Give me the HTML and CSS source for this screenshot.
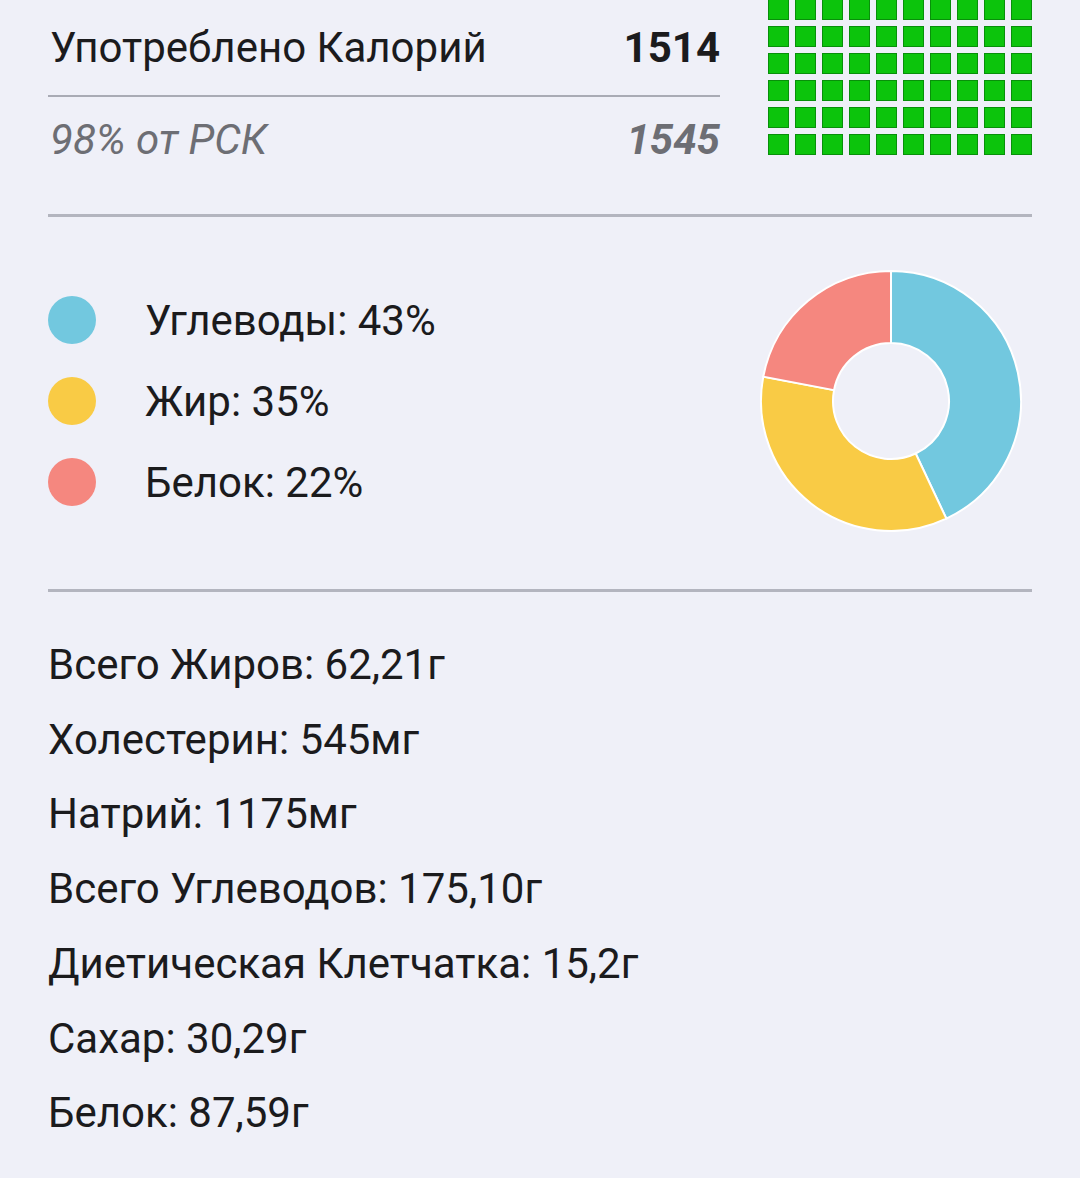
FILE: index.html
```html
<!DOCTYPE html>
<html lang="ru">
<head>
    <meta charset="UTF-8">
    <meta name="viewport" content="width=device-width, initial-scale=1.0">
    <title>Питание</title>
    <link rel="stylesheet" href="styles.css">
</head>
<body>
    <div class="page">
        <!-- Калории -->
        <div class="calories">
            <div class="calories-text">
                <div class="row">
                    <span>Употреблено Калорий</span>
                    <span class="value">1514</span>
                </div>
                <div class="thin-line"></div>
                <div class="row muted">
                    <span>98% от РСК</span>
                    <span class="value">1545</span>
                </div>
            </div>
            <div class="squares" id="squares"></div>
        </div>

        <div class="separator"></div>

        <!-- Макронутриенты -->
        <div class="macros">
            <div class="legend">
                <div class="legend-item"><span class="dot carbs"></span>Углеводы: 43%</div>
                <div class="legend-item"><span class="dot fat"></span>Жир: 35%</div>
                <div class="legend-item"><span class="dot protein"></span>Белок: 22%</div>
            </div>
            <svg class="donut" width="262" height="262" viewBox="0 0 262 262">
                <path fill="#72c8df" d="M131 1 A130 130 0 0 1 186.35 248.62 L155.70 183.48 A58 58 0 0 0 131 73 Z"/>
                <path fill="#f9cb45" d="M186.35 248.62 A130 130 0 0 1 3.30 106.64 L74.03 120.13 A58 58 0 0 0 155.70 183.48 Z"/>
                <path fill="#f5877f" d="M3.30 106.64 A130 130 0 0 1 131 1 L131 73 A58 58 0 0 0 74.03 120.13 Z"/>
            </svg>
        </div>

        <div class="separator"></div>

        <!-- Детали -->
        <div class="details">
            <div>Всего Жиров: 62,21г</div>
            <div>Холестерин: 545мг</div>
            <div>Натрий: 1175мг</div>
            <div>Всего Углеводов: 175,10г</div>
            <div>Диетическая Клетчатка: 15,2г</div>
            <div>Сахар: 30,29г</div>
            <div>Белок: 87,59г</div>
        </div>
    </div>

    <script>
        const squares = document.getElementById('squares');
        for (let i = 0; i < 60; i++) {
            const sq = document.createElement('div');
            sq.className = 'square';
            squares.appendChild(sq);
        }
    </script>
</body>
</html>
```

FILE: styles.css
```css
/* General */
body {
    font-family: 'Roboto', 'Noto Sans', sans-serif;
    background-color: #eff0f8;
    color: #1b1b1d;
    margin: 0;
    padding: 0;
    overflow: hidden;
}

.page {
    padding: 0 48px;
    font-size: 42px;
}

/* Калории */
.calories {
    display: flex;
    align-items: flex-start;
    justify-content: space-between;
}

.calories-text {
    width: 672px;
    padding-top: 23px;
}

.row {
    display: flex;
    justify-content: space-between;
    line-height: 50px;
    padding-left: 2px;
}

.value {
    font-weight: bold;
}

.muted {
    color: #6d6e74;
    font-style: italic;
}

.thin-line {
    height: 2px;
    background-color: #a9abb5;
    margin: 22px 0 18px;
}

.squares {
    display: grid;
    grid-template-columns: repeat(10, 21px);
    grid-auto-rows: 21px;
    gap: 6px;
    margin-top: -1px;
}

.square {
    background-color: #0cc40c;
    border: 1px solid #08900a;
    box-sizing: border-box;
}

.separator {
    height: 3px;
    background-color: #b3b5bf;
}

.calories + .separator {
    margin-top: 49px;
}

/* Макронутриенты */
.macros {
    display: flex;
    align-items: center;
    justify-content: space-between;
    padding: 53px 10px 57px 0;
}

.legend-item {
    display: flex;
    align-items: center;
    gap: 49px;
    height: 81px;
}

.dot {
    width: 48px;
    height: 48px;
    border-radius: 50%;
}

.carbs {
    background-color: #72c8df;
}

.fat {
    background-color: #f9cb45;
}

.protein {
    background-color: #f5877f;
}

.donut path {
    stroke: #ffffff;
    stroke-width: 2;
}

/* Детали */
.details {
    padding-top: 36px;
    line-height: 74.7px;
}
```
